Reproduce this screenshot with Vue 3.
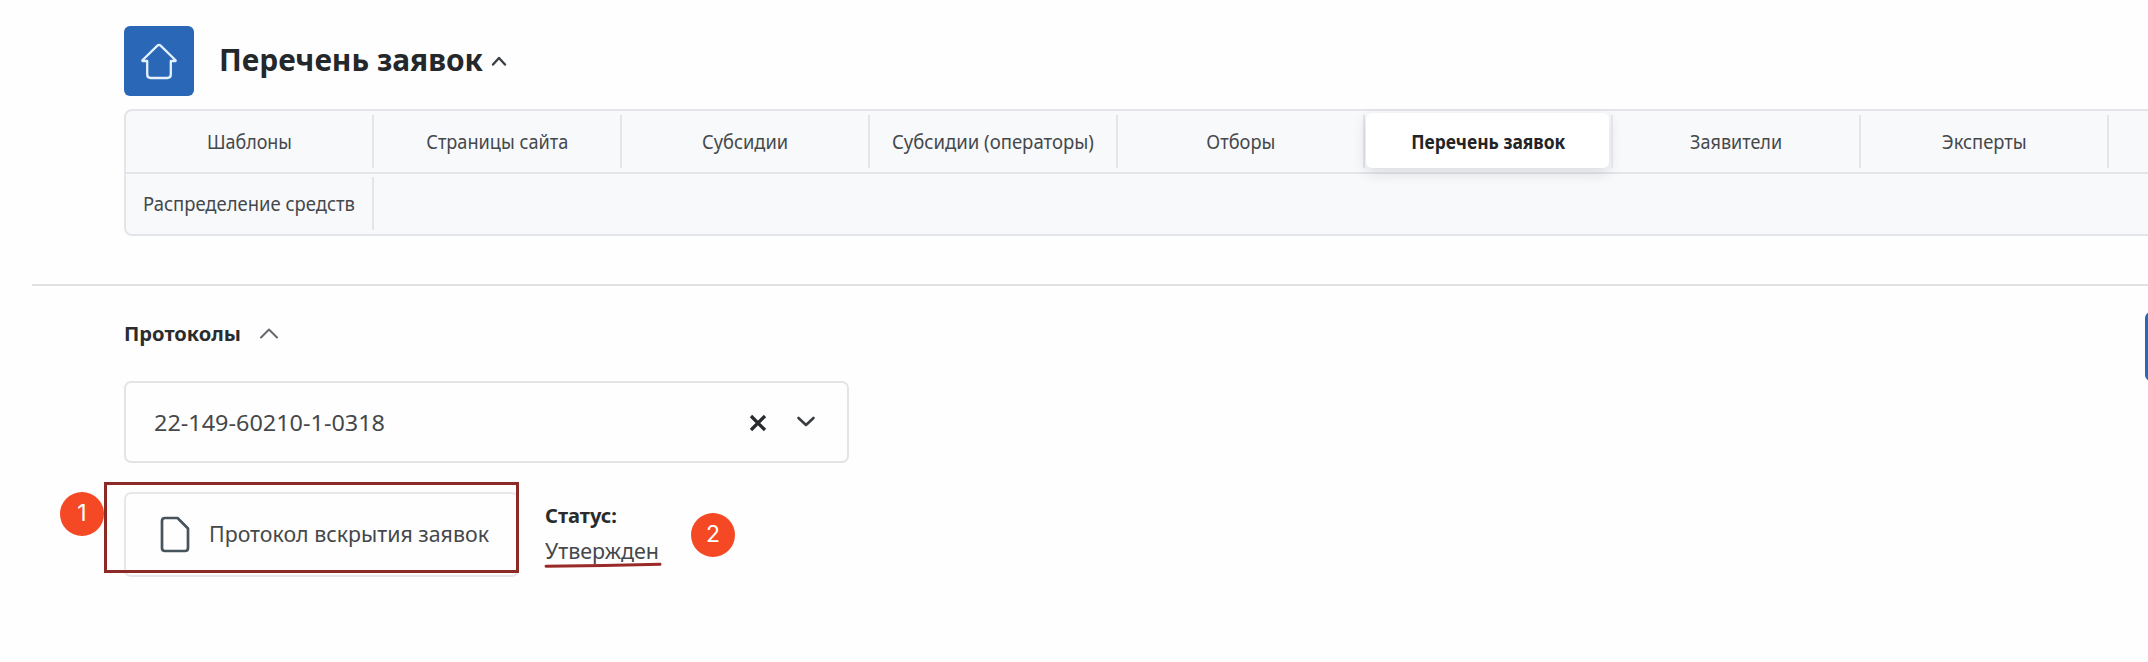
<script setup>
const tabs = [
  { label: 'Шаблоны', width: 85 },
  { label: 'Страницы сайта', width: 142 },
  { label: 'Субсидии', width: 86 },
  { label: 'Субсидии (операторы)', width: 202 },
  { label: 'Отборы', width: 69 },
  { label: 'Перечень заявок', width: 154, active: true },
  { label: 'Заявители', width: 92 },
  { label: 'Эксперты', width: 85 },
  { label: '', width: 0 },
  { label: 'Распределение средств', width: 212 },
]

// Condenses a label horizontally so that it takes the given width.
const vFit = {
  mounted(el, { value }) {
    if (value && el.offsetWidth) el.style.transform = `scaleX(${value / el.getBoundingClientRect().width})`
  },
}
</script>

<template>
  <div class="page">
    <header class="head">
      <a class="home">
        <svg width="36" height="37" viewBox="0 0 36 37">
          <path d="M18 1.8Q18.8 1.8 19.6 2.6L34.6 17.2V18H29.8V31.5Q29.8 35 26.3 35H9.7Q6.2 35 6.2 31.5V18H1.4V17.2L16.4 2.6Q17.2 1.8 18 1.8Z" />
        </svg>
      </a>
      <h1 class="title"><span v-fit="264" class="fit">Перечень заявок</span></h1>
      <svg class="title-caret" width="18" height="12" viewBox="0 0 18 12"><path d="M3 9.5 9 3 15 9.5" /></svg>
    </header>

    <nav class="tabs">
      <div v-for="(tab, i) in tabs" :key="i" class="tab" :class="{ active: tab.active }">
        <span v-fit="tab.width" class="tab-label">{{ tab.label }}</span>
      </div>
      <div class="row-line"></div>
    </nav>

    <hr class="rule" />

    <main class="content">
      <button class="add"></button>
      <div class="section">
        <div class="section-name"><span v-fit="117" class="fit">Протоколы</span></div>
        <svg class="section-caret" width="20" height="14" viewBox="0 0 20 14"><path d="M2 11.5 10 3.5 18 11.5" /></svg>
      </div>

      <div class="select">
        <span v-fit="231" class="fit value">22-149-60210-1-0318</span>
        <svg class="clear" width="18" height="18" viewBox="0 0 18 18"><path d="M2 2 16 16M16 2 2 16" /></svg>
        <svg class="chevron" width="20" height="14" viewBox="0 0 20 14"><path d="M2.5 3 10 10 17.5 3" /></svg>
      </div>

      <div class="result">
        <div class="card">
          <svg class="doc" width="30" height="37" viewBox="0 0 30 37">
            <path d="M5 2H17.5L28 12.5V32Q28 35 25 35H5Q2 35 2 32V5Q2 2 5 2Z" />
          </svg>
          <span v-fit="280" class="fit doc-name">Протокол вскрытия заявок</span>
          <div class="frame"></div>
          <div class="pin pin-one">1</div>
        </div>
        <div class="status">
          <div class="status-name"><span v-fit="72" class="fit">Статус:</span></div>
          <div class="status-value"><span v-fit="114" class="fit">Утвержден</span></div>
          <svg class="mark" width="120" height="8" viewBox="0 0 120 8"><path d="M2 5.3 60 4.6 116 3.3" /></svg>
          <div class="pin pin-two">2</div>
        </div>
      </div>
    </main>
  </div>
</template>

<style>
body {
  margin: 0;
  background: #fefefe;
}
</style>

<style scoped>
.page {
  box-sizing: border-box;
  width: 100%;
  height: 662px;
  padding-top: 26px;
  overflow: hidden;
  background: #fefefe;
  color: #45484b;
  font-family: 'Noto Sans', 'Open Sans', sans-serif;
  font-size: 20px;
}
svg {
  display: block;
  flex: none;
  fill: none;
  stroke-linecap: round;
  stroke-linejoin: round;
}
.fit {
  display: inline-block;
  transform-origin: left center;
  white-space: nowrap;
}
.head {
  display: flex;
  height: 70px;
  padding-left: 124px;
}
.home {
  display: flex;
  align-items: center;
  justify-content: center;
  width: 70px;
  height: 70px;
  border-radius: 6px;
  background: #2a67b6;
}
.home svg {
  stroke: #e4f2ff;
  stroke-width: 2.3;
}
.title {
  width: 264px;
  margin: 13px 0 0 25px;
  color: #25282b;
  font-size: 30px;
  font-weight: 700;
  line-height: 42px;
}
.title-caret {
  margin: 29px 0 0 7px;
  stroke: #3c3f42;
  stroke-width: 2.4;
}
.tabs {
  position: relative;
  display: grid;
  box-sizing: border-box;
  grid-template-columns: repeat(9, 247.9px);
  grid-template-rows: 62px 61px;
  width: 2235px;
  height: 127px;
  margin: 13px 0 0 124px;
  border: 2px solid #e3e5e9;
  border-radius: 8px;
  background: #f8f9fb;
}
.row-line {
  position: absolute;
  top: 61px;
  right: 0;
  left: 0;
  height: 2px;
  background: #e3e5e8;
}
.tab {
  position: relative;
  display: flex;
  align-items: center;
  justify-content: center;
  padding: 0 2px 1px 0;
}
.tab::after {
  content: '';
  position: absolute;
  top: 4px;
  right: 0;
  width: 2px;
  height: 53px;
  background: #e3e5e8;
}
.tab:nth-child(10) {
  padding-bottom: 0;
}
.tab-label {
  flex: none;
  white-space: nowrap;
}
.tab.active {
  z-index: 1;
  color: #222426;
  font-weight: 700;
}
.tab.active::before {
  content: '';
  position: absolute;
  top: 2px;
  right: 4px;
  bottom: 5px;
  left: 1px;
  border-radius: 6px;
  background: #fff;
  box-shadow: 0 5px 14px rgba(40, 50, 60, 0.14);
}
.tab.active .tab-label {
  position: relative;
}
.rule {
  height: 2px;
  margin: 48px 0 0 32px;
  border: 0;
  background: #e1e1e1;
}
.content {
  position: relative;
  padding-left: 124px;
}
.add {
  position: absolute;
  top: 26px;
  right: -66px;
  width: 69px;
  height: 69px;
  border: 0;
  border-radius: 6px;
  background: #2a67b6;
}
.section {
  display: flex;
  padding-top: 34px;
  height: 61px;
}
.section-name {
  width: 135px;
  height: 28px;
  color: #2a2c2e;
  font-weight: 700;
  line-height: 28px;
}
.section-caret {
  margin-top: 6px;
  stroke: #65696d;
  stroke-width: 2;
}
.select {
  display: flex;
  align-items: center;
  box-sizing: border-box;
  width: 725px;
  height: 82px;
  padding: 0 31px 0 28px;
  border: 2px solid #e3e4e6;
  border-radius: 7px;
}
.value {
  font-size: 22px;
  line-height: 30px;
}
.clear {
  margin: 2px 0 0 auto;
  stroke: #292b2d;
  stroke-width: 3.3;
  stroke-linecap: butt;
}
.chevron {
  margin: 0 0 1px 29px;
  stroke: #3b3e41;
  stroke-width: 2.6;
}
.result {
  display: flex;
  gap: 26px;
  margin-top: 29px;
}
.card {
  position: relative;
  display: flex;
  box-sizing: border-box;
  width: 395px;
  height: 85px;
  padding: 22px 0 0 34px;
  border: 2px solid #e7e7e9;
  border-radius: 7px;
}
.doc {
  stroke: #47545c;
  stroke-width: 2.7;
}
.doc-name {
  height: 30px;
  margin: 3px 0 0 19px;
  font-size: 21px;
  line-height: 30px;
}
.frame {
  position: absolute;
  top: -12px;
  left: -22px;
  box-sizing: border-box;
  width: 415px;
  height: 91px;
  border: 3px solid #8c2a25;
}
.status {
  position: relative;
  padding-top: 10px;
}
.status-name,
.status-value {
  width: 120px;
  line-height: 28px;
}
.status-name {
  color: #292b2d;
  font-weight: 700;
}
.status-value {
  margin-top: 7px;
  font-size: 21px;
}
.mark {
  position: absolute;
  top: 69px;
  left: -1px;
  stroke: #9a2a27;
  stroke-width: 3;
}
.pin {
  position: absolute;
  width: 44px;
  height: 44px;
  border-radius: 50%;
  background: #f44924;
  color: #fff;
  font-family: Inter, sans-serif;
  font-size: 23px;
  line-height: 43px;
  text-align: center;
}
.pin-one {
  top: -2px;
  left: -66px;
}
.pin-two {
  top: 21px;
  left: 146px;
}
</style>
